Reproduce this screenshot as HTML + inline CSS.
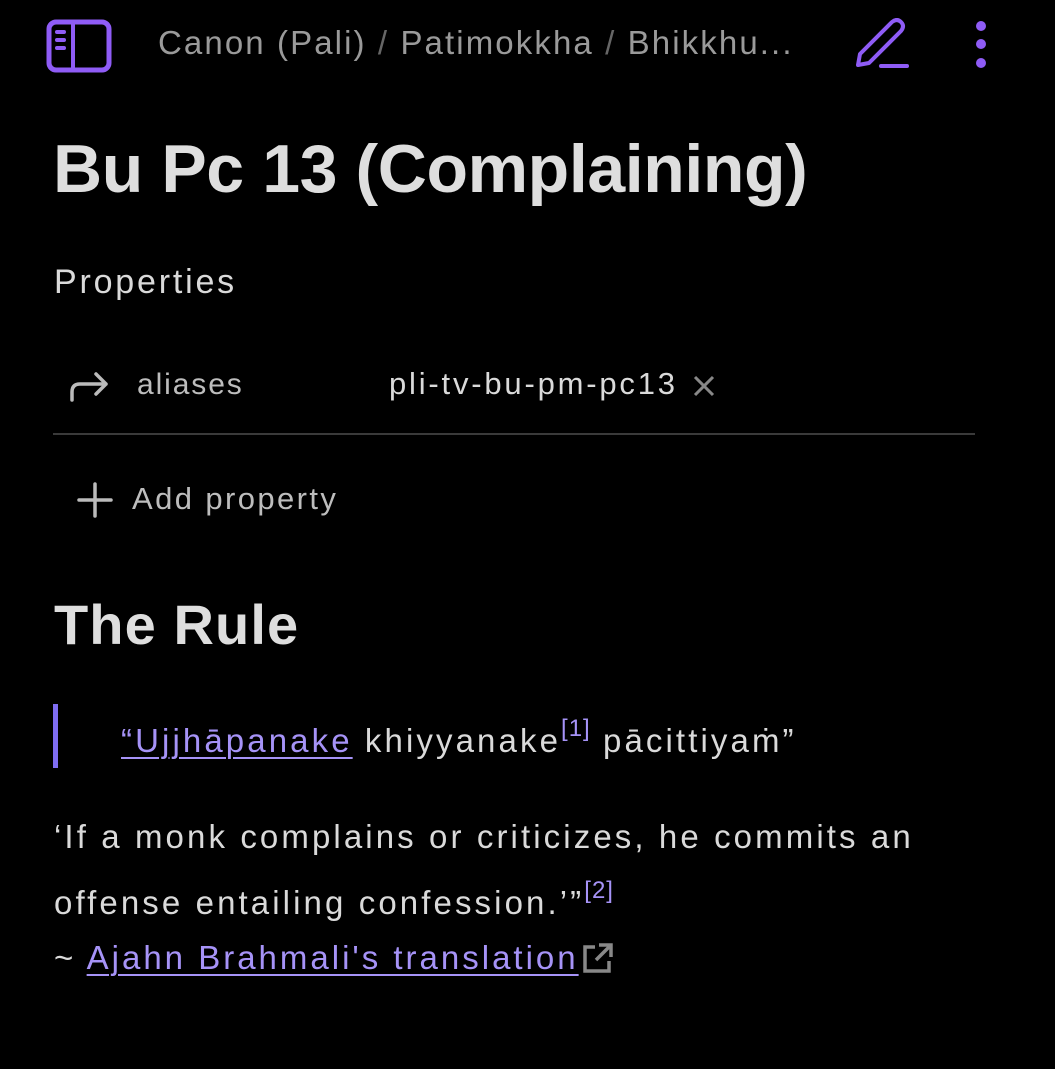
<!DOCTYPE html>
<html><head><meta charset="utf-8"><style>
body{margin:0;width:1055px;height:1069px;background:#000;overflow:hidden;font-family:"Liberation Sans",sans-serif;color:#dadada;position:relative}
.a{position:absolute;white-space:nowrap}
a{color:#a693f7;text-decoration:underline;text-decoration-thickness:2px;text-underline-offset:5px}
sup{color:#a693f7;font-size:24px;position:relative;top:-4px;letter-spacing:1px}
</style></head><body>
<svg class="a" style="left:46px;top:19px" width="66" height="54" viewBox="0 0 66 54"><rect x="3" y="3" width="60" height="48" rx="7" fill="none" stroke="#8f5cf6" stroke-width="5"/><line x1="27" y1="3" x2="27" y2="51" stroke="#8f5cf6" stroke-width="4"/><rect x="9" y="11" width="11" height="4" rx="2" fill="#8f5cf6"/><rect x="9" y="19" width="11" height="4" rx="2" fill="#8f5cf6"/><rect x="9" y="27" width="11" height="4" rx="2" fill="#8f5cf6"/></svg>
<div class="a" style="left:158px;top:24px;font-size:33px;letter-spacing:2.1px;color:#9a9a9a">Canon (Pali) <span style="color:#666">/</span> Patimokkha <span style="color:#666">/</span> Bhikkhu...</div>
<svg class="a" style="left:852px;top:18px" width="60" height="54" viewBox="0 0 60 54"><path d="M6 47 L8 36 L40 4 Q45 0 49 4 Q53 8 49 13 L17 45 Z" fill="none" stroke="#8f5cf6" stroke-width="4" stroke-linejoin="round"/><line x1="29" y1="48" x2="55" y2="48" stroke="#8f5cf6" stroke-width="4" stroke-linecap="round"/></svg>
<svg class="a" style="left:972px;top:20px" width="18" height="50"><circle cx="9" cy="6" r="5" fill="#8f5cf6"/><circle cx="9" cy="24" r="5" fill="#8f5cf6"/><circle cx="9" cy="43" r="5" fill="#8f5cf6"/></svg>
<div class="a" style="left:53px;top:130px;font-size:68px;font-weight:bold;letter-spacing:-0.4px;color:#dedede">Bu Pc 13 (Complaining)</div>
<div class="a" style="left:54px;top:263px;font-size:34px;letter-spacing:2.8px;color:#dadada">Properties</div>
<svg class="a" style="left:68px;top:370px" width="44" height="34"><path d="M4 30 V22 Q4 14 12 14 H38 M28 4 L38 14 L28 24" fill="none" stroke="#bbb" stroke-width="3.5" stroke-linecap="round" stroke-linejoin="round"/></svg>
<div class="a" style="left:137px;top:368px;font-size:30px;letter-spacing:1.9px;color:#bdbdbd">aliases</div>
<div class="a" style="left:389px;top:366px;font-size:31px;letter-spacing:2.8px;color:#dadada">pli-tv-bu-pm-pc13</div>
<svg class="a" style="left:692px;top:374px" width="24" height="24"><path d="M3 3 L21 21 M21 3 L3 21" stroke="#888" stroke-width="3"/></svg>
<div class="a" style="left:53px;top:433px;width:922px;height:2px;background:#3a3a3a"></div>
<svg class="a" style="left:77px;top:482px" width="36" height="36"><path d="M18 2 V34 M2 18 H34" stroke="#bbb" stroke-width="3.5" stroke-linecap="round"/></svg>
<div class="a" style="left:132px;top:481px;font-size:31px;letter-spacing:2.4px;color:#bdbdbd">Add property</div>
<div class="a" style="left:54px;top:592px;font-size:56px;font-weight:bold;letter-spacing:1.1px;color:#dedede">The Rule</div>
<div class="a" style="left:53px;top:704px;width:5px;height:64px;background:#7f6df2"></div>
<div class="a" style="left:121px;top:719px;font-size:33px;letter-spacing:3.1px"><a>“Ujjhāpanake</a> khiyyanake<sup>[1]</sup> pācittiyaṁ”</div>
<div class="a" style="left:54px;top:818px;font-size:33px;letter-spacing:3.1px">‘If a monk complains or criticizes, he commits an</div>
<div class="a" style="left:54px;top:881px;font-size:33px;letter-spacing:3.1px">offense entailing confession.’”<sup>[2]</sup></div>
<div class="a" style="left:54px;top:939px;font-size:33px;letter-spacing:3px">~ <a>Ajahn Brahmali's translation</a><svg width="34" height="34" style="vertical-align:-6px;margin-left:2px"><path d="M14 6 H4 V30 H28 V20 M18 4 H30 V16 M30 4 L15 19" fill="none" stroke="#888" stroke-width="3.5"/></svg></div>
</body></html>
